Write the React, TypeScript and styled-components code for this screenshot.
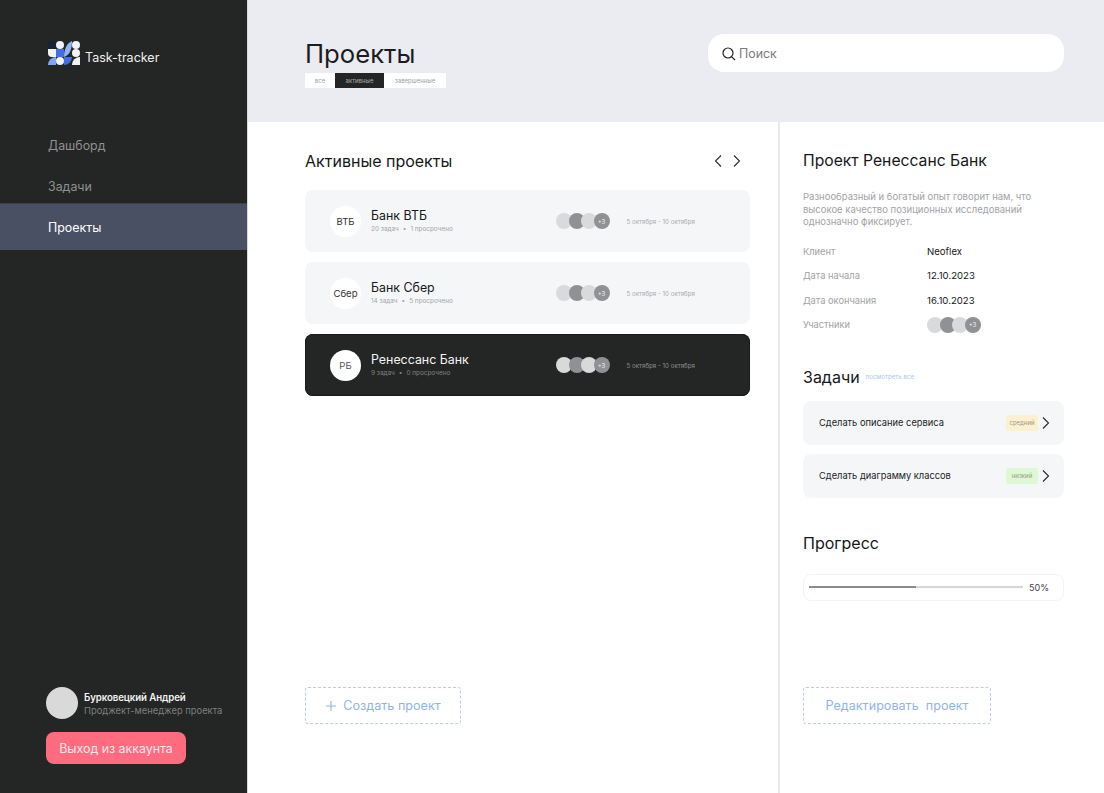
import styled, { createGlobalStyle } from "styled-components";

const GlobalStyle = createGlobalStyle`
html, body {
  margin: 0;
  padding: 0;
  background: #fff;
}
* {
  box-sizing: border-box;
}
body {
  font-family: Inter, "Noto Sans", sans-serif;
}
`;

const Page = styled.div`
display: flex;
width: 1104px;
height: 793px;
overflow: hidden;
`;

const Sidebar = styled.aside`
width: 248px;
flex-shrink: 0;
background: #242625;
border-right: 1px solid #d9d9d9;
display: flex;
flex-direction: column;
`;

const Brand = styled.div`
display: flex;
gap: 5px;
padding: 41px 0 0 48px;
height: 203px;
align-items: flex-start;
`;

const BrandName = styled.span`
color: #f0f0f0;
font-size: 12.5px;
line-height: 32px;
margin-top: 1px;
`;

const NavItem = styled.div<{ $active?: boolean }>`
height: ${(p) => (p.$active ? "47px" : "41px")};
margin-top: ${(p) => (p.$active ? "-4px" : "0")};
padding-left: 48px;
display: flex;
align-items: center;
font-size: 12.4px;
color: ${(p) => (p.$active ? "#ffffff" : "#8f9190")};
background: ${(p) => (p.$active ? "#4a5064" : "transparent")};
border-top: ${(p) => (p.$active ? "1px solid #3c4048" : "none")};
`;

const Nav = styled.nav`
display: flex;
flex-direction: column;
margin-top: -78px;
`;

const SidebarFooter = styled.div`
margin-top: auto;
padding: 0 0 29px 46px;
display: flex;
flex-direction: column;
gap: 13px;
`;

const Profile = styled.div`
display: flex;
align-items: center;
gap: 6px;
`;

const ProfileAvatar = styled.div`
width: 32px;
height: 32px;
border-radius: 50%;
background: #d9d9d9;
`;

const ProfileText = styled.div`
padding-top: 2px;
`;

const ProfileName = styled.div`
color: #f2f2f2;
font-size: 9.7px;
font-weight: 600;
line-height: 13px;
letter-spacing: -0.1px;
`;

const ProfileRole = styled.div`
color: #7d7f7e;
font-size: 9.4px;
line-height: 13px;
`;

const LogoutButton = styled.button`
width: 140px;
height: 32px;
border: none;
border-radius: 8px;
background: #ff6b7f;
color: #ffe9ec;
font-family: inherit;
font-size: 12.4px;
padding: 0;
`;

const Main = styled.main`
flex: 1;
display: flex;
flex-direction: column;
min-width: 0;
`;

const Header = styled.header`
height: 122px;
background: #ebecf1;
padding: 34px 40px 0 57px;
display: flex;
justify-content: space-between;
align-items: flex-start;
`;

const PageTitle = styled.h1`
margin: 0;
font-size: 25.7px;
font-weight: 400;
line-height: 39px;
color: #1b1c1d;
`;

const Tabs = styled.div`
display: flex;
width: 141px;
height: 15px;
background: #fff;
`;

const Tab = styled.div<{ $active?: boolean; $w: number }>`
width: ${(p) => p.$w}px;
display: flex;
align-items: center;
justify-content: center;
font-size: 6px;
color: ${(p) => (p.$active ? "#a9abaa" : "#9d9e9f")};
background: ${(p) => (p.$active ? "#242625" : "transparent")};
`;

const Search = styled.div`
width: 356px;
height: 38px;
border-radius: 16px;
background: #fff;
display: flex;
align-items: center;
gap: 2px;
padding: 1px 0 0 13px;
font-size: 12.4px;
color: #7a7a7a;
`;

const Body = styled.div`
flex: 1;
display: flex;
min-height: 0;
`;

const ProjectsColumn = styled.section`
width: 532px;
border-right: 2px solid #e9e9eb;
padding: 29px 28px 69px 57px;
display: flex;
flex-direction: column;
`;

const ColumnHead = styled.div`
display: flex;
justify-content: space-between;
align-items: center;
height: 20px;
margin-bottom: 19px;
`;

const SectionTitle = styled.h2`
margin: 0;
font-size: 16px;
font-weight: 400;
line-height: 20px;
color: #161718;
`;

const DetailTitle = styled(SectionTitle)`
font-size: 15.7px;
`;

const Arrows = styled.div`
display: flex;
gap: 5px;
margin-right: 6px;
`;

const ProjectList = styled.div`
display: flex;
flex-direction: column;
gap: 10px;
`;

const ProjectCard = styled.div<{ $dark?: boolean }>`
height: 62px;
border-radius: 8px;
background: ${(p) => (p.$dark ? "#242625" : "#f5f6f8")};
box-shadow: ${(p) => (p.$dark ? "inset 0 0 0 1px #1a1b1b" : "none")};
display: flex;
align-items: center;
padding-left: 25px;
`;

const ProjectBadge = styled.div<{ $dark?: boolean }>`
width: 31px;
height: 31px;
border-radius: 50%;
background: #fff;
display: flex;
align-items: center;
justify-content: center;
font-size: 9.6px;
color: ${(p) => (p.$dark ? "#555" : "#333")};
flex-shrink: 0;
`;

const ProjectInfo = styled.div`
width: 185px;
margin-left: 10px;
margin-top: -2px;
`;

const ProjectName = styled.div<{ $dark?: boolean }>`
font-size: 12.4px;
line-height: 17px;
color: ${(p) => (p.$dark ? "#f4f4f4" : "#17181a")};
`;

const ProjectMeta = styled.div<{ $dark?: boolean }>`
font-size: 6.4px;
line-height: 9px;
margin-top: 1px;
color: ${(p) => (p.$dark ? "#7f8180" : "#a4a5a7")};
display: flex;
gap: 4px;
`;

const ProjectDates = styled.div<{ $dark?: boolean }>`
font-size: 6.2px;
margin-left: 17px;
color: ${(p) => (p.$dark ? "#8c8e8d" : "#a9aaac")};
`;

const AvatarStack = styled.div`
display: flex;
`;

const Avatar = styled.div<{ $tone: string }>`
width: 16px;
height: 16px;
border-radius: 50%;
background: ${(p) => p.$tone};
margin-left: -3.5px;
display: flex;
align-items: center;
justify-content: center;
font-size: 6px;
color: #f0f0f0;
&:first-child {
  margin-left: 0;
}
`;

const BottomAction = styled.div`
margin-top: auto;
`;

const DashedButton = styled.button<{ $w: number }>`
width: ${(p) => p.$w}px;
height: 37px;
background: #fff;
border: 1px dashed #bccde8;
border-radius: 3px;
color: #8fb4e8;
font-family: inherit;
font-size: 12.6px;
display: flex;
align-items: center;
justify-content: center;
gap: 6px;
padding: 0;
`;

const DetailColumn = styled.section`
flex: 1;
padding: 29px 40px 69px 23px;
display: flex;
flex-direction: column;
`;

const Description = styled.p`
margin: 20px 0 0;
max-width: 240px;
font-size: 9.5px;
line-height: 12.7px;
color: #a2a3a5;
`;

const Facts = styled.dl`
margin: 10.4px 0 0;
display: grid;
grid-template-columns: 124px 1fr;
grid-auto-rows: 24.3px;
align-items: center;
`;

const FactLabel = styled.dt`
font-size: 9.3px;
color: #a2a3a5;
`;

const FactValue = styled.dd`
margin: 0;
font-size: 9.6px;
color: #17181a;
`;

const TasksHead = styled.div`
display: flex;
align-items: center;
gap: 6px;
margin-top: 30px;
`;

const ViewAll = styled.span`
font-size: 6.2px;
color: #a9c8ee;
`;

const TaskList = styled.div`
display: flex;
flex-direction: column;
gap: 9px;
margin-top: 14px;
`;

const TaskRow = styled.div`
height: 44px;
border-radius: 8px;
background: #f5f6f8;
display: flex;
align-items: center;
padding: 0 11px 0 16px;
font-size: 9.3px;
color: #1c1d1f;
`;

const TaskTitle = styled.span`
flex: 1;
`;

const Priority = styled.span<{ $tone: string }>`
width: 32px;
height: 16px;
background: ${(p) => p.$tone};
border-radius: 2px;
display: flex;
align-items: center;
justify-content: center;
font-size: 6px;
color: #9a9a8e;
margin-right: 1px;
`;

const ProgressHead = styled(SectionTitle)`
margin-top: 35px;
`;

const ProgressCard = styled.div`
height: 27px;
margin-top: 21px;
border: 1px solid #f3f3f5;
border-radius: 8px;
display: flex;
align-items: center;
padding: 0 14px 0 5px;
gap: 6px;
font-size: 9px;
color: #444;
`;

const ProgressTrack = styled.div`
flex: 1;
height: 2px;
background: #d6d6d8;
`;

const ProgressFill = styled.div`
height: 2px;
background: #8a8b8d;
`;

function Logo() {
  return (
    <svg width="32" height="24" viewBox="0 0 32 24">
      <rect x="0" y="0" width="8" height="8" fill="#1a2233" />
      <circle cx="12" cy="4" r="4" fill="#f1f2f5" />
      <path d="M0 8 H8 V16 H4 A4 4 0 0 1 0 12Z" fill="#f1f2f5" />
      <path d="M8 8 H16 V16 H8Z" fill="#3f6fe0" />
      <path d="M16 16 C16 8 19 2 24 0 C24 8 22 14 16 16Z" fill="#8fb6f2" />
      <circle cx="28" cy="4" r="4" fill="#f1f2f5" />
      <circle cx="28" cy="12" r="4" fill="#f1f2f5" />
      <path d="M0 24 A8 8 0 0 1 8 16 V24Z" fill="#7da7ef" />
      <circle cx="12" cy="20" r="4" fill="#f1f2f5" />
      <path d="M16 16 H24 A8 8 0 0 1 16 24Z" fill="#3f6fe0" />
      <path d="M24 24 A8 8 0 0 1 32 16 V24Z" fill="#f1f2f5" />
    </svg>
  );
}

function Chevron({ left }: { left?: boolean }) {
  return (
    <svg width="14" height="14" viewBox="0 0 14 14" fill="none" stroke="#2a2b2c" strokeWidth="1.1">
      <path d={left ? "M10 1.5 L4.5 7 L10 12.5" : "M4 1.5 L9.5 7 L4 12.5"} />
    </svg>
  );
}

function Members({ dark }: { dark?: boolean }) {
  const light = dark ? "#d8d9d9" : "#d9dadb";
  return (
    <AvatarStack>
      <Avatar $tone={light} />
      <Avatar $tone="#909194" />
      <Avatar $tone={light} />
      <Avatar $tone="#909194">+3</Avatar>
    </AvatarStack>
  );
}

const projects = [
  { badge: "ВТБ", name: "Банк ВТБ", tasks: "20 задач", late: "1 просрочено" },
  { badge: "Сбер", name: "Банк Сбер", tasks: "14 задач", late: "5 просрочено" },
  { badge: "РБ", name: "Ренессанс Банк", tasks: "9 задач", late: "0 просрочено", dark: true },
];

export default function App() {
  return (
    <Page>
      <GlobalStyle />
      <Sidebar>
        <Brand>
          <Logo />
          <BrandName>Task-tracker</BrandName>
        </Brand>
        <Nav>
          <NavItem>Дашборд</NavItem>
          <NavItem>Задачи</NavItem>
          <NavItem $active>Проекты</NavItem>
        </Nav>
        <SidebarFooter>
          <Profile>
            <ProfileAvatar />
            <ProfileText>
              <ProfileName>Бурковецкий Андрей</ProfileName>
              <ProfileRole>Проджект-менеджер проекта</ProfileRole>
            </ProfileText>
          </Profile>
          <LogoutButton>Выход из аккаунта</LogoutButton>
        </SidebarFooter>
      </Sidebar>
      <Main>
        <Header>
          <div>
            <PageTitle>Проекты</PageTitle>
            <Tabs>
              <Tab $w={30}>все</Tab>
              <Tab $w={49} $active>активные</Tab>
              <Tab $w={62}>завершенные</Tab>
            </Tabs>
          </div>
          <Search>
            <svg width="16" height="16" viewBox="0 0 16 16" fill="none" stroke="#222" strokeWidth="1.2">
              <circle cx="7" cy="7" r="5" />
              <path d="M10.8 10.8 L14 14" />
            </svg>
            Поиск
          </Search>
        </Header>
        <Body>
          <ProjectsColumn>
            <ColumnHead>
              <SectionTitle>Активные проекты</SectionTitle>
              <Arrows>
                <Chevron left />
                <Chevron />
              </Arrows>
            </ColumnHead>
            <ProjectList>
              {projects.map((p) => (
                <ProjectCard key={p.name} $dark={p.dark}>
                  <ProjectBadge $dark={p.dark}>{p.badge}</ProjectBadge>
                  <ProjectInfo>
                    <ProjectName $dark={p.dark}>{p.name}</ProjectName>
                    <ProjectMeta $dark={p.dark}>
                      <span>{p.tasks}</span>
                      <span>•</span>
                      <span>{p.late}</span>
                    </ProjectMeta>
                  </ProjectInfo>
                  <Members dark={p.dark} />
                  <ProjectDates $dark={p.dark}>5 октября - 10 октября</ProjectDates>
                </ProjectCard>
              ))}
            </ProjectList>
            <BottomAction>
              <DashedButton $w={156}>
                <svg width="12" height="12" viewBox="0 0 12 12" stroke="#8fb4e8" strokeWidth="1.1">
                  <path d="M6 1 V11 M1 6 H11" />
                </svg>
                Создать проект
              </DashedButton>
            </BottomAction>
          </ProjectsColumn>
          <DetailColumn>
            <DetailTitle>Проект Ренессанс Банк</DetailTitle>
            <Description>
              Разнообразный и богатый опыт говорит нам, что высокое качество позиционных исследований однозначно фиксирует.
            </Description>
            <Facts>
              <FactLabel>Клиент</FactLabel>
              <FactValue>Neoflex</FactValue>
              <FactLabel>Дата начала</FactLabel>
              <FactValue>12.10.2023</FactValue>
              <FactLabel>Дата окончания</FactLabel>
              <FactValue>16.10.2023</FactValue>
              <FactLabel>Участники</FactLabel>
              <FactValue>
                <Members />
              </FactValue>
            </Facts>
            <TasksHead>
              <SectionTitle>Задачи</SectionTitle>
              <ViewAll>посмотреть все</ViewAll>
            </TasksHead>
            <TaskList>
              <TaskRow>
                <TaskTitle>Сделать описание сервиса</TaskTitle>
                <Priority $tone="#fdf0cf">средний</Priority>
                <Chevron />
              </TaskRow>
              <TaskRow>
                <TaskTitle>Сделать диаграмму классов</TaskTitle>
                <Priority $tone="#ddf8d2">низкий</Priority>
                <Chevron />
              </TaskRow>
            </TaskList>
            <ProgressHead>Прогресс</ProgressHead>
            <ProgressCard>
              <ProgressTrack>
                <ProgressFill style={{ width: "50%" }} />
              </ProgressTrack>
              50%
            </ProgressCard>
            <BottomAction>
              <DashedButton $w={188}>Редактировать{"\u00a0"} проект</DashedButton>
            </BottomAction>
          </DetailColumn>
        </Body>
      </Main>
    </Page>
  );
}
